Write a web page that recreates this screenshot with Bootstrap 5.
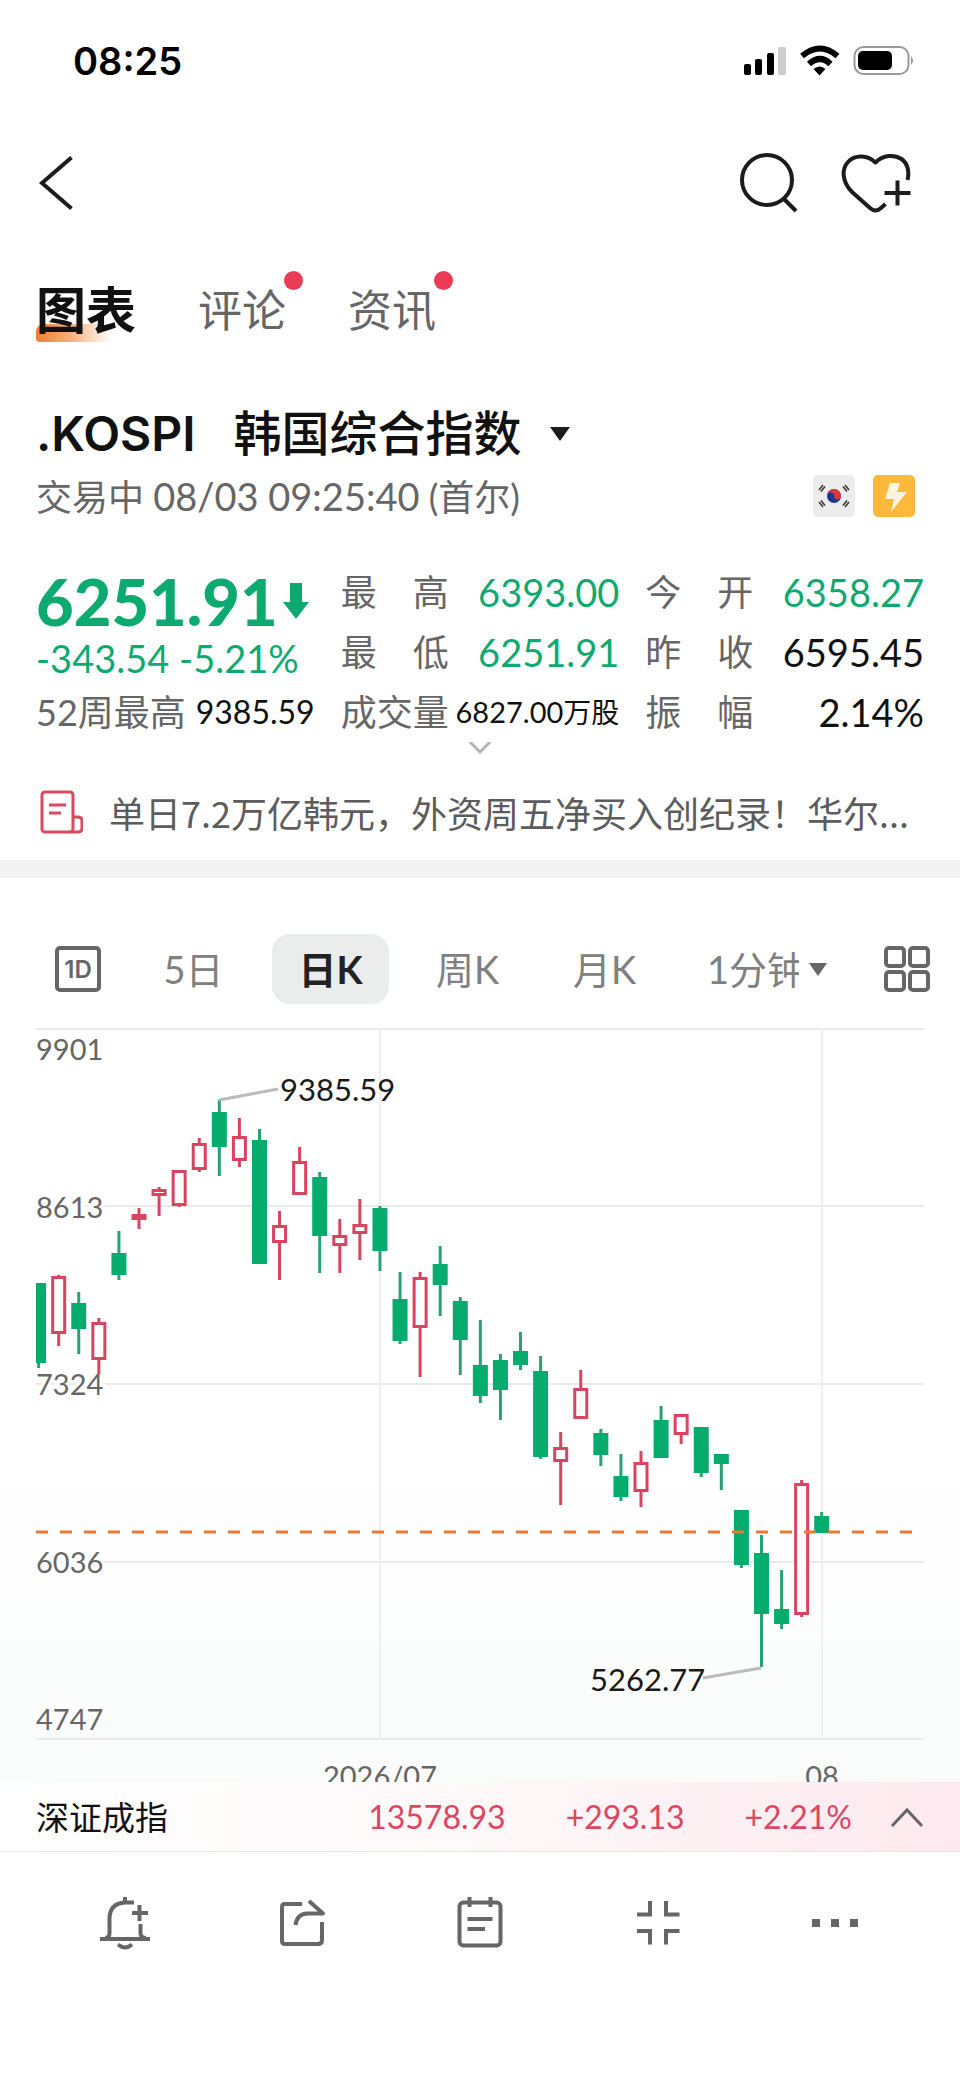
<!DOCTYPE html>
<html lang="zh-CN">
<head>
<meta charset="utf-8">
<meta name="viewport" content="width=device-width, initial-scale=1">
<title>韩国综合指数</title>
<link href="https://cdn.jsdelivr.net/npm/bootstrap@5.3.0/dist/css/bootstrap.min.css" rel="stylesheet">
<style>
:root{--ink:#111;--muted-ink:#666;--down:#0caa70;--up:#dc4661}
body{font-family:Lato,"Noto Sans CJK SC",sans-serif;color:var(--ink);background:#fff;font-size:36px;line-height:60px}
svg{display:block;flex:none}
button,select,input{font-family:inherit}
.plain{border:0;background:none;padding:0;color:inherit;line-height:inherit}
.page-x{padding-left:36px;padding-right:36px}
.soft{color:var(--muted-ink)}
.down{color:var(--down)}
.up{color:var(--up)}
.statusbar{height:122px;padding-left:73px;padding-right:45px}
.clock{font:600 38px/40px Inter,sans-serif;color:#000}
.topbar{height:122px}
.topbar-actions{gap:42px}
.main-tabs{height:132px;gap:62px}
.main-tabs a{position:relative;font-size:44px;color:#666;text-decoration:none;z-index:0}
.main-tabs a.current{font-size:50px;font-weight:700;color:var(--ink)}
.main-tabs a.current::before{content:"";position:absolute;z-index:-1;left:0;bottom:-2px;width:76px;height:18px;border-radius:8px 0 0 4px;background:linear-gradient(90deg,#ef7e2b,#f7b68a 50%,#fff)}
.dot{position:absolute;right:-17px;top:-9px;width:19px;height:19px;border-radius:50%;background:#eb3b56}
.index-name{padding-top:26px;gap:26px}
.index-name h1{font:600 48px/64px Inter,"Noto Sans CJK SC",sans-serif;gap:38px;margin:0}
.index-name h1 span{font-weight:500}
.session-row{height:60px;padding-right:9px}
.session-row time,.change{font-size:38px}
.session-icons{gap:18px}
.quote{padding-top:36px;display:grid;grid-template-columns:repeat(3,1fr);column-gap:26px;grid-auto-rows:60px}
.price-block{grid-row:span 2}
.price{font-size:65px;font-weight:900;line-height:78px}
.change{line-height:36px}
.lbl{width:108px;text-align-last:justify;color:var(--muted-ink)}
.val{font-size:38px}
.val-m{font-size:32px}
.val-s{font-size:29px}
.val-s small{font-size:28px}
.news{height:60px;margin-top:28px;margin-bottom:18px;gap:26px;font-family:"Noto Sans CJK SC",sans-serif}
.news a{color:#5c5c5c;text-decoration:none}
.band{height:18px;background:#f3f3f3}
.periods{padding:56px 30px 23px 55px}
.periods .plain{font-size:38px;color:#808080;height:70px;line-height:70px}
.period-set{margin-left:24px}
.period-set .plain{width:117px;margin:0 10px}
.period-set .chosen{border-radius:18px;background:#ebecec;color:#222;font-weight:700}
.minute{gap:10px;margin-left:34px}
.minute select{appearance:none;width:92px}
.chart-wrap{background:linear-gradient(#fff 55%,#fafbfb)}
.chart-wrap svg{width:100%;height:auto}
.ticker{height:70px;border-bottom:1px solid #e6e6e6;background:linear-gradient(90deg,#fff,#fff8f9 50%,#fde9ef);font-size:32px}
.ticker-name{font-size:33px}
.ticker-nums{gap:60px;margin-right:38px}
.toolbar{height:142px}
</style>
</head>
<body>
<div class="statusbar d-flex align-items-center justify-content-between">
  <span class="clock">08:25</span>
  <svg width="172" height="32" viewBox="743 45 172 32" aria-hidden="true">
    <rect x="744" y="64" width="7" height="11" rx="2"/><rect x="755" y="59" width="7" height="16" rx="2"/><rect x="767" y="53" width="7" height="22" rx="2"/><rect x="778" y="47" width="8" height="28" rx="2" fill="#ccc"/>
    <g fill="none" stroke="#000" stroke-width="6"><path d="M802 56Q820 41 837.500 56"/><path d="M809 64Q820 54 830.500 64"/></g>
    <path d="M813.500 69Q820 64 825.500 69L819.500 75.500Z"/>
    <rect x="854.500" y="47" width="54" height="27" rx="9" fill="none" stroke="#999" stroke-width="2"/><rect x="858" y="51" width="34" height="19" rx="5"/><path d="M911 56Q915 60.500 911 65Z" fill="#999"/>
  </svg>
</div>
<header class="topbar page-x d-flex align-items-center justify-content-between">
  <button class="plain" aria-label="返回"><svg width="40" height="60" viewBox="36 153 40 60" fill="none" stroke="#1c1c1c" stroke-width="4"><path d="M71.500 157.500L42 183L71.500 208.500"/></svg></button>
  <div class="topbar-actions d-flex">
    <button class="plain" aria-label="搜索"><svg width="60" height="64" viewBox="737 151 60 64" fill="none" stroke="#1c1c1c" stroke-width="4"><circle cx="766" cy="180" r="25"/><path d="M783 199L795 211"/></svg></button>
    <button class="plain" aria-label="加自选"><svg width="84" height="64" viewBox="840 151 84 64" fill="none" stroke="#1c1c1c" stroke-width="4" stroke-linejoin="round"><path d="M907.500 180C909 174 909 164 901.500 159C894 154 883 155 875.500 162.500C868 155 855 154 848 162C840 171 844 184 852 192L870 208Q875.500 213 881 208L885.500 204"/><path d="M897.500 180.500V205.500M884.500 193H910.500"/></svg></button>
  </div>
</header>
<nav class="main-tabs page-x d-flex align-items-center">
  <a href="#chart" class="current">图表</a>
  <a href="#comments">评论<span class="dot"></span></a>
  <a href="#news">资讯<span class="dot"></span></a>
</nav>
<main>
<section class="page-x">
  <div class="index-name d-flex align-items-center">
    <h1 class="d-flex">.KOSPI <span>韩国综合指数</span></h1>
    <button class="plain" aria-label="切换指数"><svg width="24" height="16" viewBox="0 0 24 16"><path d="M2 1H22L12 15Z" fill="#1c1c1c"/></svg></button>
  </div>
  <div class="session-row d-flex align-items-center justify-content-between">
    <span class="soft">交易中 <time>08/03 09:25:40</time> (首尔)</span>
    <span class="session-icons d-flex">
      <svg width="42" height="42" viewBox="0 0 42 42" role="img" aria-label="韩国"><rect width="42" height="42" rx="5" fill="#ececec"/><circle cx="21" cy="21" r="7" fill="#1b3a8c"/><path d="M14 21A7 7 0 0 1 28 21A3.500 3.500 0 0 1 21 21A3.500 3.500 0 0 0 14 21Z" fill="#e0343f"/><g stroke="#333" stroke-width="1.500"><path d="M6 15L10 10M8 16.500L12 11.500M32 10L36 15M30 11.500L34 16.500M6 27L10 32M8 25.500L12 30.500M36 27L32 32M34 25.500L30 30.500"/></g></svg>
      <svg width="42" height="42" viewBox="0 0 42 42" role="img" aria-label="实时"><rect width="42" height="42" rx="5" fill="#fcb93b"/><path d="M17 8H27L24 17H34L18 37L21 24H12Z" fill="#fff4dc"/></svg>
    </span>
  </div>
  <div class="quote">
    <div class="price-block">
      <div class="price down d-flex align-items-center">6251.91<svg class="ms-1" width="28" height="38" viewBox="0 0 28 38"><path d="M8 1H20V20H27L14 37L1 20H8Z" fill="currentColor"/></svg></div>
      <div class="change down">-343.54 -5.21%</div>
    </div>
    <div class="d-flex justify-content-between"><span class="lbl">最 高</span><span class="val down">6393.00</span></div>
    <div class="d-flex justify-content-between"><span class="lbl">今 开</span><span class="val down">6358.27</span></div>
    <div class="d-flex justify-content-between"><span class="lbl">最 低</span><span class="val down">6251.91</span></div>
    <div class="d-flex justify-content-between"><span class="lbl">昨 收</span><span class="val">6595.45</span></div>
    <div class="d-flex justify-content-between"><span class="soft">52周最高</span><span class="val-m">9385.59</span></div>
    <div class="d-flex justify-content-between"><span class="lbl">成交量</span><span class="val-s">6827.00<small>万股</small></span></div>
    <div class="d-flex justify-content-between"><span class="lbl">振 幅</span><span class="val">2.14%</span></div>
  </div>
  <div class="d-flex justify-content-center">
    <button class="plain" aria-label="展开"><svg width="24" height="12" viewBox="0 0 24 12" fill="none" stroke="#b5b5b5" stroke-width="3"><path d="M2 0L12 10L22 0"/></svg></button>
  </div>
  <div class="news d-flex align-items-center">
    <svg class="ms-1" width="43" height="44" viewBox="0 0 43 44" fill="none" stroke="#d84a5e" stroke-width="3"><rect x="2" y="2" width="31" height="40" rx="3"/><path d="M33 27H38Q42 27 42 31V38Q42 42 38 42H30M9 15H26M9 23H21"/></svg>
    <a href="#news" class="text-nowrap">单日7.2万亿韩元，外资周五净买入创纪录！华尔...</a>
  </div>
</section>
<div class="band"></div>
<section id="chart">
  <div class="periods d-flex align-items-center">
    <button class="plain d-flex align-items-center" aria-label="1D"><svg width="46" height="46" viewBox="0 0 46 46"><rect x="2" y="2" width="42" height="42" rx="3" fill="none" stroke="#666" stroke-width="4"/><text x="23" y="32" text-anchor="middle" font-family="Inter,sans-serif" font-weight="600" font-size="24" fill="#666">1D</text></svg></button>
    <div class="period-set d-flex">
      <button class="plain">5日</button>
      <button class="plain chosen">日K</button>
      <button class="plain">周K</button>
      <button class="plain">月K</button>
    </div>
    <span class="minute d-flex align-items-center"><select class="plain" aria-label="分钟周期"><option>1分钟</option></select><svg width="18" height="13" viewBox="0 0 18 13"><path d="M0 0H18L9 13Z" fill="#666"/></svg></span>
    <button class="plain ms-auto d-flex align-items-center" aria-label="更多图表"><svg width="46" height="46" viewBox="0 0 46 46" fill="none" stroke="#666" stroke-width="4"><rect x="2" y="2" width="18" height="18" rx="3"/><rect x="26" y="2" width="18" height="18" rx="3"/><rect x="2" y="26" width="18" height="18" rx="3"/><rect x="26" y="26" width="18" height="18" rx="3"/></svg></button>
  </div>
  <div class="chart-wrap">
    <svg viewBox="0 1027 960 755" font-family="Lato,sans-serif" font-size="29" fill="#666">
      <path d="M36 1029H924M36 1206H924M36 1384H924M36 1562H924M36 1739H924" stroke="#e9eaea" stroke-width="2"/>
      <path d="M380 1029V1739M822 1029V1739" stroke="#f0eeee" stroke-width="2"/>
      <g stroke="#fff" stroke-width="6" paint-order="stroke">
        <text x="36" y="1060">9901</text><text x="36" y="1218">8613</text><text x="36" y="1395">7324</text><text x="36" y="1573">6036</text><text x="36" y="1730" stroke="#fbfcfc">4747</text>
      </g>
      <text x="380" y="1787" text-anchor="middle">2026/07</text><text x="822" y="1787" text-anchor="middle">08</text>
      <clipPath id="plot"><rect x="36" y="1029" width="888" height="711"/></clipPath>
      <g id="candles" clip-path="url(#plot)"></g>
      <path d="M36 1532H912" stroke="#ea7a2f" stroke-width="3" stroke-dasharray="12 12"/>
      <path d="M219 1100L278 1089M703 1678L761 1668" stroke="#bbb" stroke-width="3"/>
      <g font-size="31" fill="#1a1a1a"><text x="280" y="1101">9385.59</text><text x="590" y="1691">5262.77</text></g>
    </svg>
  </div>
</section>
</main>
<footer>
  <div class="ticker page-x d-flex align-items-center">
    <span class="ticker-name">深证成指</span>
    <div class="ticker-nums up d-flex ms-auto"><span>13578.93</span><span>+293.13</span><span>+2.21%</span></div>
    <button class="plain" aria-label="展开行情"><svg width="34" height="22" viewBox="0 0 34 22" fill="none" stroke="#666" stroke-width="3"><path d="M2 20L17 4L32 20"/></svg></button>
  </div>
  <div class="toolbar page-x row row-cols-5 g-0 align-items-center">
    <button class="plain col d-flex justify-content-center" aria-label="提醒"><svg width="54" height="56" viewBox="98 1895 54 56" fill="none" stroke="#666" stroke-width="4"><path d="M125 1897V1903M134 1902.500H125Q109.500 1903.500 109.500 1919V1933Q109.500 1938 105 1938M100 1939H150M140.500 1924V1933Q140.500 1938 146 1938M139.500 1905V1921M132 1913H148M118 1944.500Q125 1950.500 132 1944.500"/></svg></button>
    <button class="plain col d-flex justify-content-center" aria-label="分享"><svg width="50" height="56" viewBox="277 1895 50 56" fill="none" stroke="#666" stroke-width="4" stroke-linejoin="round"><path d="M302 1904H285Q282 1904 282 1907V1941Q282 1944 285 1944H318Q322 1944 322 1940V1922M309 1901L323 1913.500H307Q297 1914 295.500 1925"/></svg></button>
    <button class="plain col d-flex justify-content-center" aria-label="笔记"><svg width="50" height="56" viewBox="455 1895 50 56" fill="none" stroke="#666" stroke-width="4"><rect x="459.500" y="1902.500" width="41" height="43" rx="4"/><path d="M469.500 1897V1907M490.500 1897V1907M467.500 1919H492.500M467.500 1929H485"/></svg></button>
    <button class="plain col d-flex justify-content-center" aria-label="收起全屏"><svg width="50" height="56" viewBox="633 1895 50 56" fill="none" stroke="#666" stroke-width="4"><path d="M637 1914.500H650V1901M666 1901V1914.500H679.500M637 1931H650V1944.500M666 1944.500V1931H679.500"/></svg></button>
    <button class="plain col d-flex justify-content-center" aria-label="更多"><svg width="50" height="56" viewBox="810 1895 50 56" fill="#666"><rect x="812" y="1919" width="8" height="8"/><rect x="831" y="1919" width="8" height="8"/><rect x="850" y="1919" width="8" height="8"/></svg></button>
  </div>
</footer>
<script src="https://cdn.jsdelivr.net/npm/bootstrap@5.3.0/dist/js/bootstrap.bundle.min.js"></script>
<script>
// direction (g = falling, r = rising), high, body top, body bottom, low
const bars=[
['g',1283,1283,1363,1368],['r',1275,1276,1334,1346],['g',1292,1303,1329,1354],['r',1318,1322,1360,1374],
['g',1231,1253,1275,1280],['r',1208,1214,1220,1229],['r',1187,1189,1196,1216],['r',1170,1170,1206,1207],
['r',1138,1143,1170,1172],['g',1100,1112,1147,1176],['r',1118,1136,1161,1167],['g',1129,1140,1264,1264],
['r',1211,1225,1243,1280],['r',1147,1161,1195,1195],['g',1172,1177,1236,1273],['r',1219,1235,1246,1273],
['r',1199,1224,1234,1260],['g',1206,1208,1251,1271],['g',1272,1299,1341,1344],['r',1272,1277,1328,1377],
['g',1246,1264,1285,1316],['g',1297,1301,1340,1375],['g',1320,1365,1396,1403],['g',1354,1360,1390,1420],
['g',1332,1351,1365,1370],['g',1356,1371,1457,1459],['r',1432,1447,1462,1505],['r',1370,1388,1419,1419],
['g',1429,1433,1455,1466],['g',1454,1476,1497,1501],['r',1451,1462,1492,1507],['g',1406,1420,1458,1458],
['r',1414,1414,1435,1444],['g',1427,1427,1473,1477],['g',1454,1454,1464,1490],['g',1510,1510,1565,1568],
['g',1535,1553,1614,1667],['g',1570,1609,1624,1629],['r',1480,1483,1615,1617],['g',1512,1516,1533,1533]];
document.getElementById('candles').innerHTML=bars.map(([d,h,t,b,l],i)=>{
  const x=38.6+i*20.08;
  if(d==='g')return `<path d="M${x} ${h}V${l}" stroke="#2aa175" stroke-width="3"/><rect x="${x-7.5}" y="${t}" width="15" height="${b-t}" fill="#06ab6e"/>`;
  return `<path d="M${x} ${h}V${t}M${x} ${b}V${l}" stroke="#d84560" stroke-width="3"/><rect x="${x-6}" y="${t+1.5}" width="12" height="${b-t-3}" fill="${b-t<7?'#e8415c':'#fff'}" stroke="#d84560" stroke-width="3"/>`;
}).join('');
</script>
</body>
</html>
